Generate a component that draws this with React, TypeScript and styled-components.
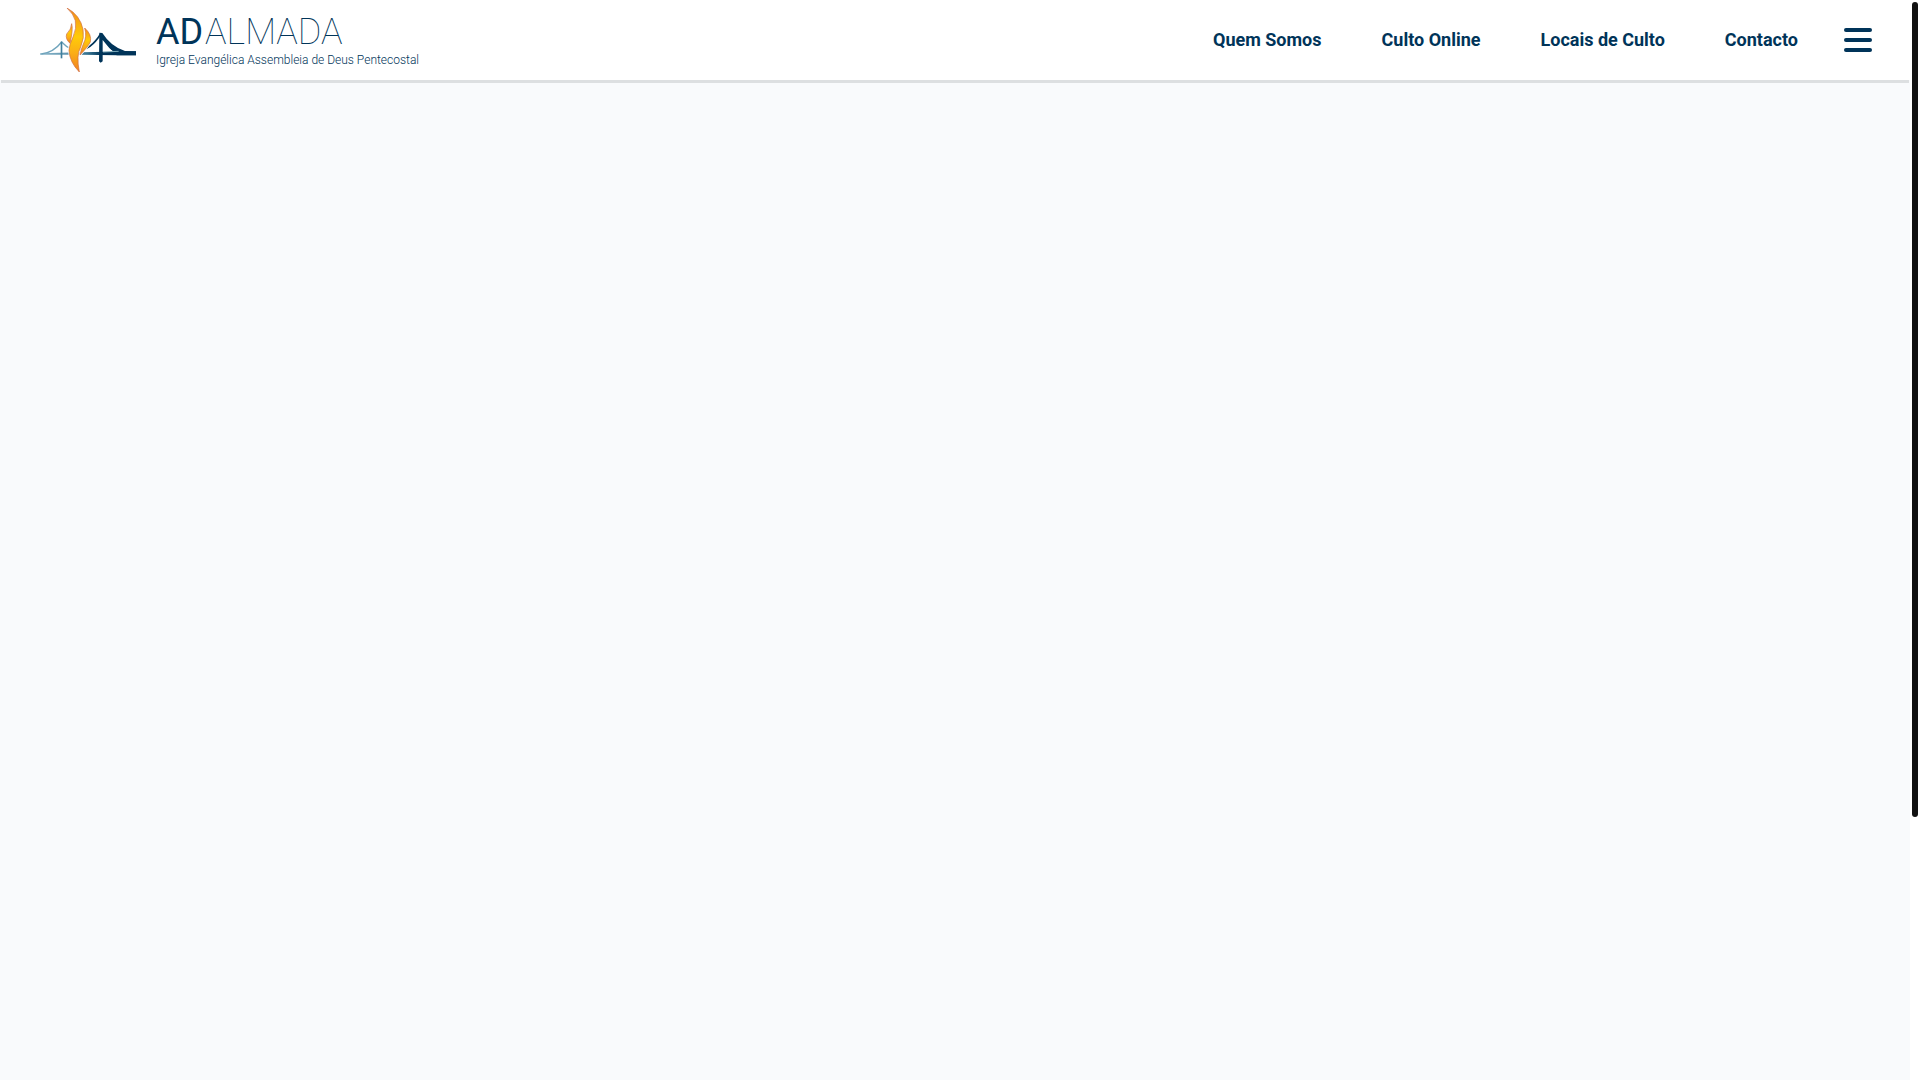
import React from "react";
import styled, { createGlobalStyle } from "styled-components";

const navy = "#003459";

const GlobalStyle = createGlobalStyle`
  * { box-sizing: border-box; }
  body {
    margin: 0;
    background: #f9fafc;
    color: ${navy};
    font-family: Roboto, "Liberation Sans", sans-serif;
  }
`;

const Shell = styled.div`
  display: grid;
  grid-template-columns: minmax(0, 1fr) 10px;
  height: 100vh;
`;

const Page = styled.div`
  min-width: 0;
`;

const Header = styled.header`
  display: flex;
  align-items: center;
  justify-content: space-between;
  height: 80px;
  padding: 0 38px 0 40px;
  background: #fff;
  box-shadow: 0 4px 0 -1px #dddfe1;
`;

const Brand = styled.a`
  display: flex;
  align-items: center;
  gap: 20px;
  color: inherit;
  text-decoration: none;
`;

const Logo = styled.svg`
  display: block;
  width: 96px;
  height: 64px;
`;

const BrandText = styled.span`
  display: flex;
  flex-direction: column;
`;

const BrandName = styled.span`
  display: flex;
  gap: 2px;
  font-size: 36px;
  line-height: 40px;
  font-weight: 100;
`;

const Initials = styled.span`
  font-weight: 400;
`;

const Tagline = styled.span`
  font-size: 12px;
  line-height: 16px;
  font-weight: 300;
`;

const Nav = styled.nav`
  display: flex;
  align-items: center;
  gap: 46px;
`;

const Links = styled.ul`
  display: flex;
  gap: 60px;
  margin: 0;
  padding: 0;
  list-style: none;
`;

const NavLink = styled.a`
  color: inherit;
  font-size: 18px;
  line-height: 24px;
  font-weight: 700;
  text-decoration: none;
`;

const MenuButton = styled.button`
  display: flex;
  flex-direction: column;
  gap: 6px;
  width: 28px;
  padding: 0;
  border: 0;
  background: none;
  cursor: pointer;
`;

const Bar = styled.span`
  height: 4px;
  border-radius: 2px;
  background: ${navy};
`;

const Track = styled.div`
  padding: 2px;
  background: #fff;
`;

const Thumb = styled.div`
  height: 75.75%;
  border-radius: 3px;
  background: #111;
`;

const links = ["Quem Somos", "Culto Online", "Locais de Culto", "Contacto"];

function BridgeFlame() {
  return (
    <Logo viewBox="30 24 288 192" aria-hidden="true">
      <defs>
        <linearGradient id="flame" x1="0" y1="0" x2="0" y2="1">
          <stop offset="0" stopColor="#f28a1c" />
          <stop offset="0.45" stopColor="#ffcb08" />
          <stop offset="0.7" stopColor="#fbae17" />
          <stop offset="1" stopColor="#f08020" />
        </linearGradient>
        <linearGradient id="deck" x1="30" y1="0" x2="318" y2="0" gradientUnits="userSpaceOnUse">
          <stop offset="0" stopColor="#8fb9cc" />
          <stop offset="0.3" stopColor="#5d93ae" />
          <stop offset="0.5" stopColor="#34718f" />
          <stop offset="0.65" stopColor={navy} />
          <stop offset="1" stopColor={navy} />
        </linearGradient>
      </defs>
      <path d="M30 160L150 157L318 154L318 166L262 166L150 164L75 164L30 164Z" fill="url(#deck)" />
      <path d="M34 162Q70 158 95 126Q109 141 122 146" fill="none" stroke="#6fa4bc" strokeWidth="4" />
      <path d="M92 125H97V175H92Z" fill="#3f7f9e" />
      <path d="M146 150Q182 150 212 102" fill="none" stroke={navy} strokeWidth="5" />
      <path d="M208 98L217 99Q243 140 285 153L318 154V166H260Q235 143 218 120V184L212 188L207 184Z" fill={navy} />
      <path d="M219 126Q232 145 252 155L219 156Z" fill="#fff" />
      <path d="M219 156L266 154" stroke="#79a9b9" strokeWidth="3" />
      <g fill="none" stroke="#fff" strokeWidth="6" strokeLinejoin="round">
        <path d="M125 71Q130 88 120 130Q105 116 110 102Q124 88 125 71Z" />
        <path d="M164 84Q186 103 181 126Q174 140 150 165Q154 145 160 132Q172 109 164 84Z" />
        <path d="M111 24Q150 45 159 88Q164 112 152 141Q138 165 148 216Q119 187 117 151Q118 134 129 111Q141 84 136 62Q131 42 111 24Z" />
      </g>
      <g fill="url(#flame)" stroke="#cf6b3f" strokeWidth="2" strokeLinejoin="round">
        <path d="M125 71Q130 88 120 130Q105 116 110 102Q124 88 125 71Z" />
        <path d="M164 84Q186 103 181 126Q174 140 150 165Q154 145 160 132Q172 109 164 84Z" />
        <path d="M111 24Q150 45 159 88Q164 112 152 141Q138 165 148 216Q119 187 117 151Q118 134 129 111Q141 84 136 62Q131 42 111 24Z" />
      </g>
    </Logo>
  );
}

export default function App() {
  return (
    <>
      <GlobalStyle />
      <Shell>
        <Page>
          <Header>
            <Brand href="#">
              <BridgeFlame />
              <BrandText>
                <BrandName>
                  <Initials>AD</Initials>
                  <span>ALMADA</span>
                </BrandName>
                <Tagline>Igreja Evangélica Assembleia de Deus Pentecostal</Tagline>
              </BrandText>
            </Brand>
            <Nav aria-label="Principal">
              <Links>
                {links.map((label) => (
                  <li key={label}>
                    <NavLink href="#">{label}</NavLink>
                  </li>
                ))}
              </Links>
              <MenuButton type="button" aria-label="Menu">
                <Bar />
                <Bar />
                <Bar />
              </MenuButton>
            </Nav>
          </Header>
          <main />
        </Page>
        <Track aria-hidden="true">
          <Thumb />
        </Track>
      </Shell>
    </>
  );
}
